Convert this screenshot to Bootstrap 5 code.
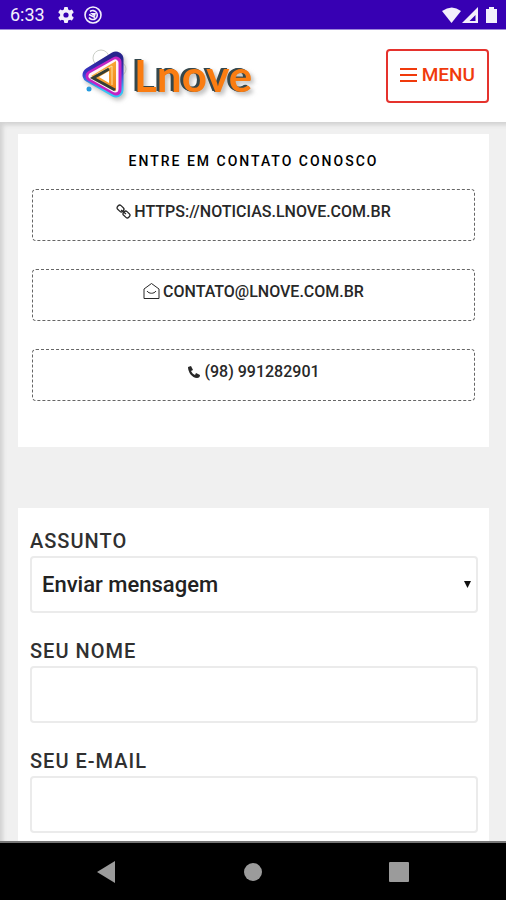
<!DOCTYPE html>
<html lang="pt-BR">
<head>
<meta charset="utf-8">
<meta name="viewport" content="width=device-width, initial-scale=1">
<title>Lnove - Contato</title>
<link href="https://cdn.jsdelivr.net/npm/bootstrap@5.3.0/dist/css/bootstrap.min.css" rel="stylesheet">
<style>
body { font-family: Roboto, "Liberation Sans", sans-serif; font-weight: 500; color: #222; background: #f0f0f0; }
.status-bar { background: #3700b3; height: 30px; padding: 0 8px 0 10px; border-bottom: 1px solid #9d86d8; color: #f3effc; font-size: 18px; font-weight: 400; line-height: 30px; gap: 9px; }
.status-time { margin-right: 4px; }
.site-header { height: 92px; padding: 0 17px 0 79px; }
.brand-word { font-family: Lato, sans-serif; font-weight: 700; font-size: 44px; fill: #fa7d12; filter: drop-shadow(-1px 0 0 #34474c) drop-shadow(-2px -1px 0 #34474c) drop-shadow(3px 3px 2px #9999); }
.btn-menu { --bs-btn-color: #f03a0c; --bs-btn-border-color: #e5322d; --bs-btn-hover-bg: #f03a0c; --bs-btn-hover-color: #fff; --bs-btn-border-width: 2px; --bs-btn-border-radius: 4px; --bs-btn-padding-x: 12px; --bs-btn-font-size: 19px; --bs-btn-font-weight: 500; --bs-btn-line-height: 28px; padding-top: 10px; padding-bottom: 12px; gap: 5px; }
.page-body { padding: 12px 17px 0 18px; box-shadow: inset 4px 4px 4px -1px #d2d2d2; gap: 61px; }
.contact-panel { padding: 18px 14px 46px; }
.contact-title { font-size: 14px; line-height: 19px; letter-spacing: 2px; font-weight: 500; margin-bottom: 18px; color: #000; }
.contact-list { gap: 28px; }
.contact-link { height: 52px; border: 1px dashed #666; border-radius: 4px; color: #282828; font-size: 16px; line-height: 20px; padding-top: 12px; gap: 3px; }
.form-panel { padding: 21px 11px 7px 12px; }
.field-label { font-size: 20px; line-height: 25px; letter-spacing: 1px; margin-bottom: 2px; color: #303030; }
.field-box { height: 57px; border: 2px solid #ebebeb; border-radius: 4px; padding: 0 10px; font-size: 22px; font-weight: 500; color: #222; }
select.field-box { padding-right: 28px; background-size: 7px 7px; background-position: right 5px center; background-image: url("data:image/svg+xml,%3Csvg xmlns='http://www.w3.org/2000/svg' viewBox='0 0 7 7'%3E%3Cpath d='M0 0h7L3.500 7z' fill='%23111'/%3E%3C/svg%3E"); }
.form-fields { gap: 26px; }
.system-nav { background: #000; height: 59px; border-top: 2px solid #777; padding: 0 85px 0 84px; }
.system-nav button { width: 44px; height: 44px; }
</style>
</head>
<body class="d-flex flex-column min-vh-100">
<div class="status-bar d-flex align-items-center">
  <span class="status-time">6:33</span>
  <svg width="16" height="16" viewBox="0 0 16 16" aria-hidden="true"><g fill="#f3effc"><rect x="6" y="0" width="4" height="16" rx="1"/><rect x="6" y="0" width="4" height="16" rx="1" transform="rotate(60 8 8)"/><rect x="6" y="0" width="4" height="16" rx="1" transform="rotate(120 8 8)"/><circle cx="8" cy="8" r="6"/></g><circle cx="8" cy="8" r="2.600" fill="#3700b3"/></svg>
  <svg width="20" height="20" viewBox="0 0 20 20" fill="none" stroke="#f3effc" stroke-width="1.600" aria-hidden="true"><circle cx="10" cy="10" r="8"/><path d="M7 6.500A4.500 4.500 0 1 1 6 12.500M6 9.500l6 3"/><path d="M7 8l5 4 1-4z" fill="#f3effc" stroke="none"/></svg>
  <svg class="ms-auto" width="56" height="18" viewBox="0 0 56 18" fill="#f3effc" aria-hidden="true"><path d="M0 5Q10-2 19 5L9.500 17z"/><path d="M36 1v16H20zM33.500 9l-6 6h6z" fill-rule="evenodd"/><path d="M44 3h3V1h5v2h3v14H44z"/></svg>
</div>
<header class="site-header bg-white d-flex align-items-center">
  <a href="#" aria-label="Lnove">
    <svg class="d-block" width="184" height="60" viewBox="0 0 184 60">
      <defs><linearGradient id="edge" x1="0" y1="0" x2="0" y2="1"><stop offset="0" stop-color="#26238d"/><stop offset=".45" stop-color="#3b35cc"/><stop offset="1" stop-color="#35c4f4"/></linearGradient>
      <linearGradient id="gold" x1="0" y1="0" x2="1" y2="1"><stop offset="0" stop-color="#ffc44f"/><stop offset="1" stop-color="#f08216"/></linearGradient></defs>
      <g fill="none" stroke="#cbcfc8"><circle cx="22" cy="12" r="8"/><circle cx="40" cy="23" r="7"/></g>
      <circle cx="10" cy="43" r="2.500" fill="#239be0"/>
      <g stroke-linejoin="round"><path d="M11 29L37 13v31z" fill="url(#edge)" stroke="url(#edge)" stroke-width="15" style="filter:drop-shadow(2px 3px 2px #9999)"/>
      <path d="M12 30L37 16v28z" fill="#c323c4" stroke="#c323c4" stroke-width="11"/>
      <path d="M13 30L36 17v26z" fill="#fff4fa" stroke="#fff4fa" stroke-width="7"/></g>
      <path d="M12 30L37 15v30z" fill="url(#gold)"/>
      <path d="M18 28l15-8v19" fill="none" stroke="#ffe2a0" stroke-width="1"/>
      <path d="M20 31l10-6v12z" fill="#fff"/>
      <path d="M30 23L14 32l22 12" fill="none" stroke="#343f36" stroke-width="3"/>
      <text class="brand-word" x="55" y="46">Lnove</text>
    </svg>
  </a>
  <button type="button" class="btn btn-menu ms-auto d-flex align-items-center"><svg width="17" height="16" viewBox="0 0 17 16" stroke="currentColor" stroke-width="2.200" aria-hidden="true"><path d="M0 2h17M0 8h17M0 14h17"/></svg>MENU</button>
</header>
<main class="page-body d-flex flex-column flex-grow-1">
  <section class="contact-panel bg-white">
    <h1 class="contact-title text-center">ENTRE EM CONTATO CONOSCO</h1>
    <div class="contact-list d-flex flex-column">
      <a class="contact-link d-flex justify-content-center align-items-start text-decoration-none" href="https://noticias.lnove.com.br"><svg width="15" height="18" viewBox="0 0 15 18" fill="none" stroke="currentColor" stroke-width="1.300" aria-hidden="true"><rect x="1" y="4" width="7" height="5" rx="2" transform="rotate(42 4.500 6.500)"/><rect x="7" y="10" width="7" height="5" rx="2" transform="rotate(42 10.500 12.500)"/><path d="M5 8l5 4"/></svg>HTTPS://NOTICIAS.LNOVE.COM.BR</a>
      <a class="contact-link d-flex justify-content-center align-items-start text-decoration-none" href="mailto:contato@lnove.com.br"><svg width="17" height="18" viewBox="0 0 17 18" fill="none" stroke="currentColor" aria-hidden="true"><path d="M1 7l7.500-5.500L16 7v9.500H1zM4 9c2 3 7 3 9 0"/></svg>CONTATO@LNOVE.COM.BR</a>
      <a class="contact-link d-flex justify-content-center align-items-start text-decoration-none" href="tel:98991282901"><svg width="14" height="18" viewBox="0 0 14 18" fill="currentColor" aria-hidden="true"><path d="M1 5l3-1 2 4-2 1c1 2 2 3 4 4l1-2 4 2c0 2-1 3-3 3C5 16 1 10 1 5z"/></svg>(98) 991282901</a>
    </div>
  </section>
  <section class="form-panel bg-white flex-grow-1">
    <form class="form-fields d-flex flex-column">
      <div><label class="field-label d-block" for="subject">ASSUNTO</label><select class="form-select field-box" id="subject"><option>Enviar mensagem</option></select></div>
      <div><label class="field-label d-block" for="name">SEU NOME</label><input class="form-control field-box" id="name" type="text"></div>
      <div><label class="field-label d-block" for="email">SEU E-MAIL</label><input class="form-control field-box" id="email" type="email"></div>
    </form>
  </section>
</main>
<nav class="system-nav d-flex justify-content-between align-items-center" aria-label="Sistema">
  <button class="btn p-0 border-0" type="button" aria-label="Voltar"><svg class="d-block mx-auto" width="20" height="22" viewBox="0 0 20 22"><path d="M1 11L19 0v22z" fill="#9b9b9b"/></svg></button>
  <button class="btn p-0 border-0" type="button" aria-label="Início"><svg class="d-block mx-auto" width="20" height="20" viewBox="0 0 20 20"><circle cx="10" cy="10" r="9" fill="#9b9b9b"/></svg></button>
  <button class="btn p-0 border-0" type="button" aria-label="Recentes"><svg class="d-block mx-auto" width="20" height="20" viewBox="0 0 20 20"><rect width="20" height="20" rx="1" fill="#9b9b9b"/></svg></button>
</nav>
<script src="https://cdn.jsdelivr.net/npm/bootstrap@5.3.0/dist/js/bootstrap.bundle.min.js"></script>
</body>
</html>
